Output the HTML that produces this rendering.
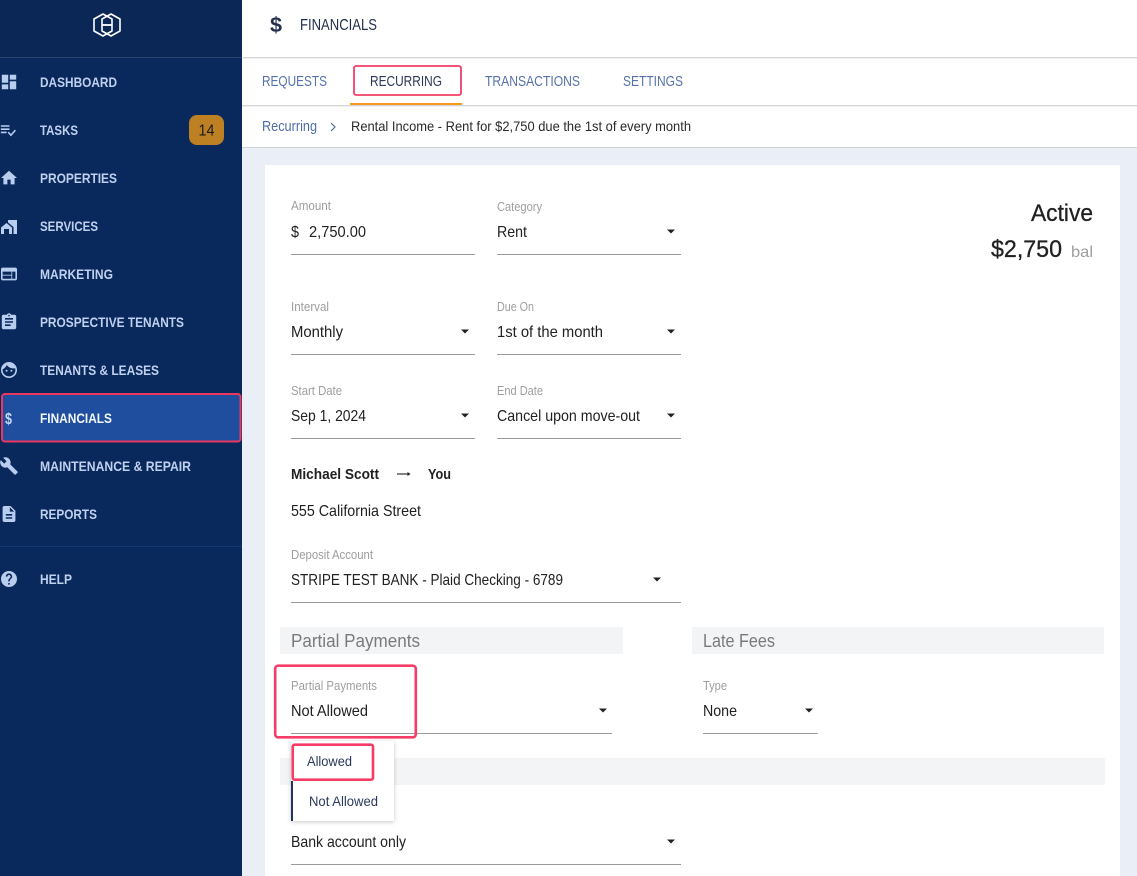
<!DOCTYPE html>
<html lang="en"><head><meta charset="utf-8"><title>Financials</title>
<style>
html,body{margin:0;padding:0;background:#fff;width:1137px;height:876px;overflow:hidden}
svg{display:block}
text{font-family:"Liberation Sans",sans-serif;white-space:pre}
.n text{font-size:14px;font-weight:700;fill:#c0d1ee}
.i path{fill:#b9cdee}
.t text{font-size:15px;fill:#5672a9}
.l text{font-size:12.500px;fill:#9e9e9e}
.v text{font-size:16px;fill:#212121}
.u rect{fill:#9b9b9b}
.c path{fill:#212121}
</style></head><body>
<svg xmlns="http://www.w3.org/2000/svg" width="1137" height="876" viewBox="0 0 1137 876">
<defs><filter id="s" x="-20%" y="-20%" width="140%" height="140%"><feDropShadow dx="0" dy="1" stdDeviation="2" flood-color="#000" flood-opacity=".22"/></filter></defs>
<rect width="1137" height="876" fill="#fff"/>
<!-- main background -->
<rect x="242" y="148" width="895" height="728" fill="#e9eef7"/>
<rect x="265" y="165" width="855" height="711" fill="#fff"/>
<rect x="242" y="57" width="895" height="1" fill="#d6d6d6"/><rect x="242" y="58" width="895" height="1" fill="#f1f1f1"/>
<rect x="242" y="105" width="895" height="1" fill="#d6d6d6"/><rect x="242" y="106" width="895" height="1" fill="#f1f1f1"/>
<rect x="242" y="147" width="895" height="1" fill="#cfd3d9"/>
<!-- sidebar -->
<rect width="242" height="876" fill="#09285c"/>
<rect width="242" height="57" fill="#0a2756"/>
<rect y="57" width="242" height="1" fill="#2b446f"/>
<rect y="546" width="242" height="1" fill="#123a72"/>
<g fill="none" stroke="#fff" stroke-width="1.800" stroke-linejoin="round">
<path d="M103 14 L94 19 V31 L103 36 L112 31 V19 Z" stroke-width="1.600"/>
<path d="M111 14 L120 19 V31 L111 36 L102 31 V19 Z" stroke-width="1.600"/>
<path d="M102 25 H112"/>
</g>
<rect x="2" y="394" width="238.500" height="47.500" rx="3" fill="#1f4e9e" stroke="#e8385f" stroke-width="2"/>
<g class="i">
<path transform="translate(-.6 72.400) scale(.8)" d="M3 13h8V3H3v10zm0 8h8v-6H3v6zm10 0h8V11h-8v10zm0-18v6h8V3h-8z"/>
<path transform="translate(-.6 120.400) scale(.72 .8)" d="M14 10H2v2h12v-2zm0-4H2v2h12V6zM2 16h8v-2H2v2zm19.500-4.500L23 13l-6.990 7-4.510-4.500L13 14l3.010 3 5.490-5.500z"/>
<path transform="translate(-.6 168.400) scale(.8)" d="M10 20v-6h4v6h5v-8h3L12 3 2 12h3v8z"/>
<path d="M1 234 V227.500 L6.500 223 L12 227.500 V234 H9 V229 H4 V234 Z M8 220 H17 V234 H13.500 V227 L8 222.500 Z"/>
<path transform="translate(-.6 264.400) scale(.8)" d="M20 4H4c-1.100 0-2 .9-2 2v12c0 1.100.9 2 2 2h16c1.100 0 2-.9 2-2V6c0-1.100-.9-2-2-2zm-5 14H4v-4h11v4zm0-5H4V9h11v4zm5 5h-4V9h4v9z"/>
<path transform="translate(-.6 312.400) scale(.8)" d="M19 3h-4.180C14.400 1.840 13.300 1 12 1c-1.300 0-2.400.84-2.820 2H5c-1.100 0-2 .9-2 2v14c0 1.100.9 2 2 2h14c1.100 0 2-.9 2-2V5c0-1.100-.9-2-2-2zm-7 0c.55 0 1 .45 1 1s-.45 1-1 1-1-.45-1-1 .45-1 1-1zm2 14H7v-2h7v2zm3-4H7v-2h10v2zm0-4H7V7h10v2z"/>
<path transform="translate(-.6 360.400) scale(.8)" d="M9 11.750c-.69 0-1.250.56-1.250 1.250s.56 1.250 1.250 1.250 1.250-.56 1.250-1.250-.56-1.250-1.250-1.250zm6 0c-.69 0-1.250.56-1.250 1.250s.56 1.250 1.250 1.250 1.250-.56 1.250-1.250-.56-1.250-1.250-1.250zM12 2C6.480 2 2 6.480 2 12s4.480 10 10 10 10-4.480 10-10S17.520 2 12 2zm0 18c-4.410 0-8-3.590-8-8 0-.29.02-.58.05-.86 2.360-1.050 4.230-2.980 5.210-5.370C11.070 8.330 14.050 10 17.420 10c.78 0 1.530-.09 2.250-.26.21.71.33 1.470.33 2.260 0 4.410-3.590 8-8 8z"/>
<path transform="translate(-.6 456.400) scale(.8)" d="M22.700 19l-9.100-9.100c.9-2.300.4-5-1.500-6.900-2-2-5-2.400-7.400-1.300L9 6 6 9 1.600 4.700C.4 7.100.9 10.100 2.900 12.100c1.900 1.900 4.600 2.400 6.900 1.500l9.100 9.100c.4.4 1 .4 1.400 0l2.300-2.300c.5-.4.5-1.100.1-1.400z"/>
<path transform="translate(-.6 504.400) scale(.8)" d="M14 2H6c-1.100 0-1.990.9-1.990 2L4 20c0 1.100.89 2 1.990 2H18c1.100 0 2-.9 2-2V8l-6-6zm2 16H8v-2h8v2zm0-4H8v-2h8v2zm-3-5V3.500L18.500 9H13z"/>
<path transform="translate(-.6 569.400) scale(.8)" d="M12 2C6.480 2 2 6.480 2 12s4.480 10 10 10 10-4.480 10-10S17.520 2 12 2zm1 17h-2v-2h2v2zm2.070-7.750l-.9.92C13.450 12.900 13 13.500 13 15h-2v-.5c0-1.100.45-2.100 1.170-2.830l1.240-1.260c.37-.36.59-.86.59-1.410 0-1.100-.9-2-2-2s-2 .9-2 2H8c0-2.210 1.790-4 4-4s4 1.790 4 4c0 .88-.36 1.680-.93 2.250z"/>
</g>
<text x="5" y="424" font-size="16" font-weight="700" fill="#c6d6f0" textLength="7" lengthAdjust="spacingAndGlyphs">$</text>
<g class="n">
<text x="40" y="87" textLength="77" lengthAdjust="spacingAndGlyphs">DASHBOARD</text>
<text x="40" y="135" textLength="38" lengthAdjust="spacingAndGlyphs">TASKS</text>
<text x="40" y="183" textLength="77" lengthAdjust="spacingAndGlyphs">PROPERTIES</text>
<text x="40" y="231" textLength="58" lengthAdjust="spacingAndGlyphs">SERVICES</text>
<text x="40" y="279" textLength="73" lengthAdjust="spacingAndGlyphs">MARKETING</text>
<text x="40" y="327" textLength="144" lengthAdjust="spacingAndGlyphs">PROSPECTIVE TENANTS</text>
<text x="40" y="375" textLength="119" lengthAdjust="spacingAndGlyphs">TENANTS &amp; LEASES</text>
<text x="40" y="423" textLength="72" lengthAdjust="spacingAndGlyphs" style="fill:#f2f6fc">FINANCIALS</text>
<text x="40" y="471" textLength="151" lengthAdjust="spacingAndGlyphs">MAINTENANCE &amp; REPAIR</text>
<text x="40" y="519" textLength="57" lengthAdjust="spacingAndGlyphs">REPORTS</text>
<text x="40" y="584" textLength="32" lengthAdjust="spacingAndGlyphs">HELP</text>
</g>
<rect x="189" y="115" width="35" height="30" rx="8" fill="#bd8123"/>
<text x="198.500" y="135.500" font-size="16" fill="#1c1c1c" textLength="16" lengthAdjust="spacingAndGlyphs">14</text>
<!-- header -->
<text x="270" y="32" font-size="21" font-weight="700" fill="#23304c" textLength="12" lengthAdjust="spacingAndGlyphs">$</text>
<text x="300" y="30" font-size="15.500" fill="#23304c" textLength="77" lengthAdjust="spacingAndGlyphs">FINANCIALS</text>
<!-- tabs -->
<g class="t">
<text x="262" y="86" textLength="65" lengthAdjust="spacingAndGlyphs">REQUESTS</text>
<text x="370" y="86" textLength="72" lengthAdjust="spacingAndGlyphs" style="fill:#2b3a55">RECURRING</text>
<text x="485" y="86" textLength="95" lengthAdjust="spacingAndGlyphs">TRANSACTIONS</text>
<text x="623" y="86" textLength="60" lengthAdjust="spacingAndGlyphs">SETTINGS</text>
</g>
<rect x="354" y="66" width="107" height="29" rx="2" fill="none" stroke="#f23f68" stroke-width="1.800"/>
<rect x="350" y="103" width="112" height="2" fill="#f5991f"/>
<!-- breadcrumb -->
<text x="262" y="131" font-size="14.500" fill="#4f6ea6" textLength="55" lengthAdjust="spacingAndGlyphs">Recurring</text>
<path d="M331 123 L335 127 L331 131" fill="none" stroke="#5a7097" stroke-width="1.200"/>
<text x="351" y="131" font-size="14" fill="#2a2a2a" textLength="340" lengthAdjust="spacingAndGlyphs">Rental Income - Rent for $2,750 due the 1st of every month</text>
<!-- form labels -->
<g class="l">
<text x="291" y="210" textLength="40" lengthAdjust="spacingAndGlyphs">Amount</text>
<text x="497" y="211" textLength="45" lengthAdjust="spacingAndGlyphs">Category</text>
<text x="291" y="311" textLength="38" lengthAdjust="spacingAndGlyphs">Interval</text>
<text x="497" y="311" textLength="37" lengthAdjust="spacingAndGlyphs">Due On</text>
<text x="291" y="395" textLength="51" lengthAdjust="spacingAndGlyphs">Start Date</text>
<text x="497" y="395" textLength="46" lengthAdjust="spacingAndGlyphs">End Date</text>
<text x="291" y="559" textLength="82" lengthAdjust="spacingAndGlyphs">Deposit Account</text>
<text x="291" y="690" textLength="86" lengthAdjust="spacingAndGlyphs">Partial Payments</text>
<text x="703" y="690" textLength="24" lengthAdjust="spacingAndGlyphs">Type</text>
</g>
<g class="v">
<text x="291" y="237" textLength="8" lengthAdjust="spacingAndGlyphs">$</text>
<text x="309" y="237" textLength="57" lengthAdjust="spacingAndGlyphs">2,750.00</text>
<text x="497" y="237" textLength="30" lengthAdjust="spacingAndGlyphs">Rent</text>
<text x="291" y="337" textLength="52" lengthAdjust="spacingAndGlyphs">Monthly</text>
<text x="497" y="337" textLength="106" lengthAdjust="spacingAndGlyphs">1st of the month</text>
<text x="291" y="421" textLength="75" lengthAdjust="spacingAndGlyphs">Sep 1, 2024</text>
<text x="497" y="421" textLength="143" lengthAdjust="spacingAndGlyphs">Cancel upon move-out</text>
<text x="291" y="516" font-size="15" textLength="130" lengthAdjust="spacingAndGlyphs">555 California Street</text>
<text x="291" y="585" textLength="272" lengthAdjust="spacingAndGlyphs">STRIPE TEST BANK - Plaid Checking - 6789</text>
<text x="291" y="716" textLength="77" lengthAdjust="spacingAndGlyphs">Not Allowed</text>
<text x="703" y="716" textLength="34" lengthAdjust="spacingAndGlyphs">None</text>
<text x="291" y="847" textLength="115" lengthAdjust="spacingAndGlyphs">Bank account only</text>
</g>
<text x="291" y="479" font-size="15" font-weight="700" fill="#212121" textLength="88" lengthAdjust="spacingAndGlyphs">Michael Scott</text>
<path d="M397 474 H408" stroke="#212121" stroke-width="1.100"/><path d="M407.500 472 L410.500 474 L407.500 476 Z" fill="#212121"/>
<text x="428" y="479" font-size="15" font-weight="700" fill="#212121" textLength="23" lengthAdjust="spacingAndGlyphs">You</text>
<!-- status -->
<text x="1031" y="221" font-size="24" fill="#212121" stroke="#212121" stroke-width=".3" textLength="62" lengthAdjust="spacingAndGlyphs">Active</text>
<text x="991" y="257" font-size="24" fill="#212121" stroke="#212121" stroke-width=".3" textLength="71" lengthAdjust="spacingAndGlyphs">$2,750</text>
<text x="1071" y="257" font-size="16" fill="#9e9e9e" textLength="22" lengthAdjust="spacingAndGlyphs">bal</text>
<!-- underlines -->
<g class="u">
<rect x="291" y="254" width="184" height="1"/><rect x="497" y="254" width="184" height="1"/>
<rect x="291" y="354" width="184" height="1"/><rect x="497" y="354" width="184" height="1"/>
<rect x="291" y="438" width="184" height="1"/><rect x="497" y="438" width="184" height="1"/>
<rect x="291" y="602" width="390" height="1"/>
<rect x="291" y="733" width="321" height="1"/><rect x="703" y="733" width="115" height="1"/>
<rect x="291" y="864" width="390" height="1"/>
</g>
<!-- carets -->
<g class="c">
<path d="M667 229.500 h8 l-4 4 z"/>
<path d="M461 329.500 h8 l-4 4 z"/><path d="M667 329.500 h8 l-4 4 z"/>
<path d="M461 413.500 h8 l-4 4 z"/><path d="M667 413.500 h8 l-4 4 z"/>
<path d="M653 577.500 h8 l-4 4 z"/>
<path d="M599 708.500 h8 l-4 4 z"/><path d="M805 708.500 h8 l-4 4 z"/>
<path d="M667 839.500 h8 l-4 4 z"/>
</g>
<!-- section bands -->
<rect x="280" y="627" width="343" height="27" fill="#f3f4f6"/>
<rect x="692" y="627" width="412" height="27" fill="#f3f4f6"/>
<rect x="280" y="758" width="825" height="27" fill="#f3f4f6"/>
<text x="291" y="647" font-size="18" fill="#7a7a7a" textLength="129" lengthAdjust="spacingAndGlyphs">Partial Payments</text>
<text x="703" y="647" font-size="18" fill="#7a7a7a" textLength="72" lengthAdjust="spacingAndGlyphs">Late Fees</text>
<!-- dropdown -->
<rect x="291" y="741" width="103" height="80" fill="#fff" filter="url(#s)"/>
<rect x="291" y="781" width="2" height="40" fill="#22345a"/>
<text x="307" y="766" font-size="14" fill="#2a3a5c" textLength="45" lengthAdjust="spacingAndGlyphs">Allowed</text>
<text x="309" y="806" font-size="14" fill="#2a3a5c" textLength="69" lengthAdjust="spacingAndGlyphs">Not Allowed</text>
<!-- highlights -->
<rect x="275.200" y="665.700" width="140.600" height="71.600" rx="3" fill="none" stroke="#f53d68" stroke-width="2.600"/>
<rect x="292.700" y="744.700" width="80.300" height="35" rx="2" fill="none" stroke="#f53d68" stroke-width="2.600"/>
</svg>
</body></html>
